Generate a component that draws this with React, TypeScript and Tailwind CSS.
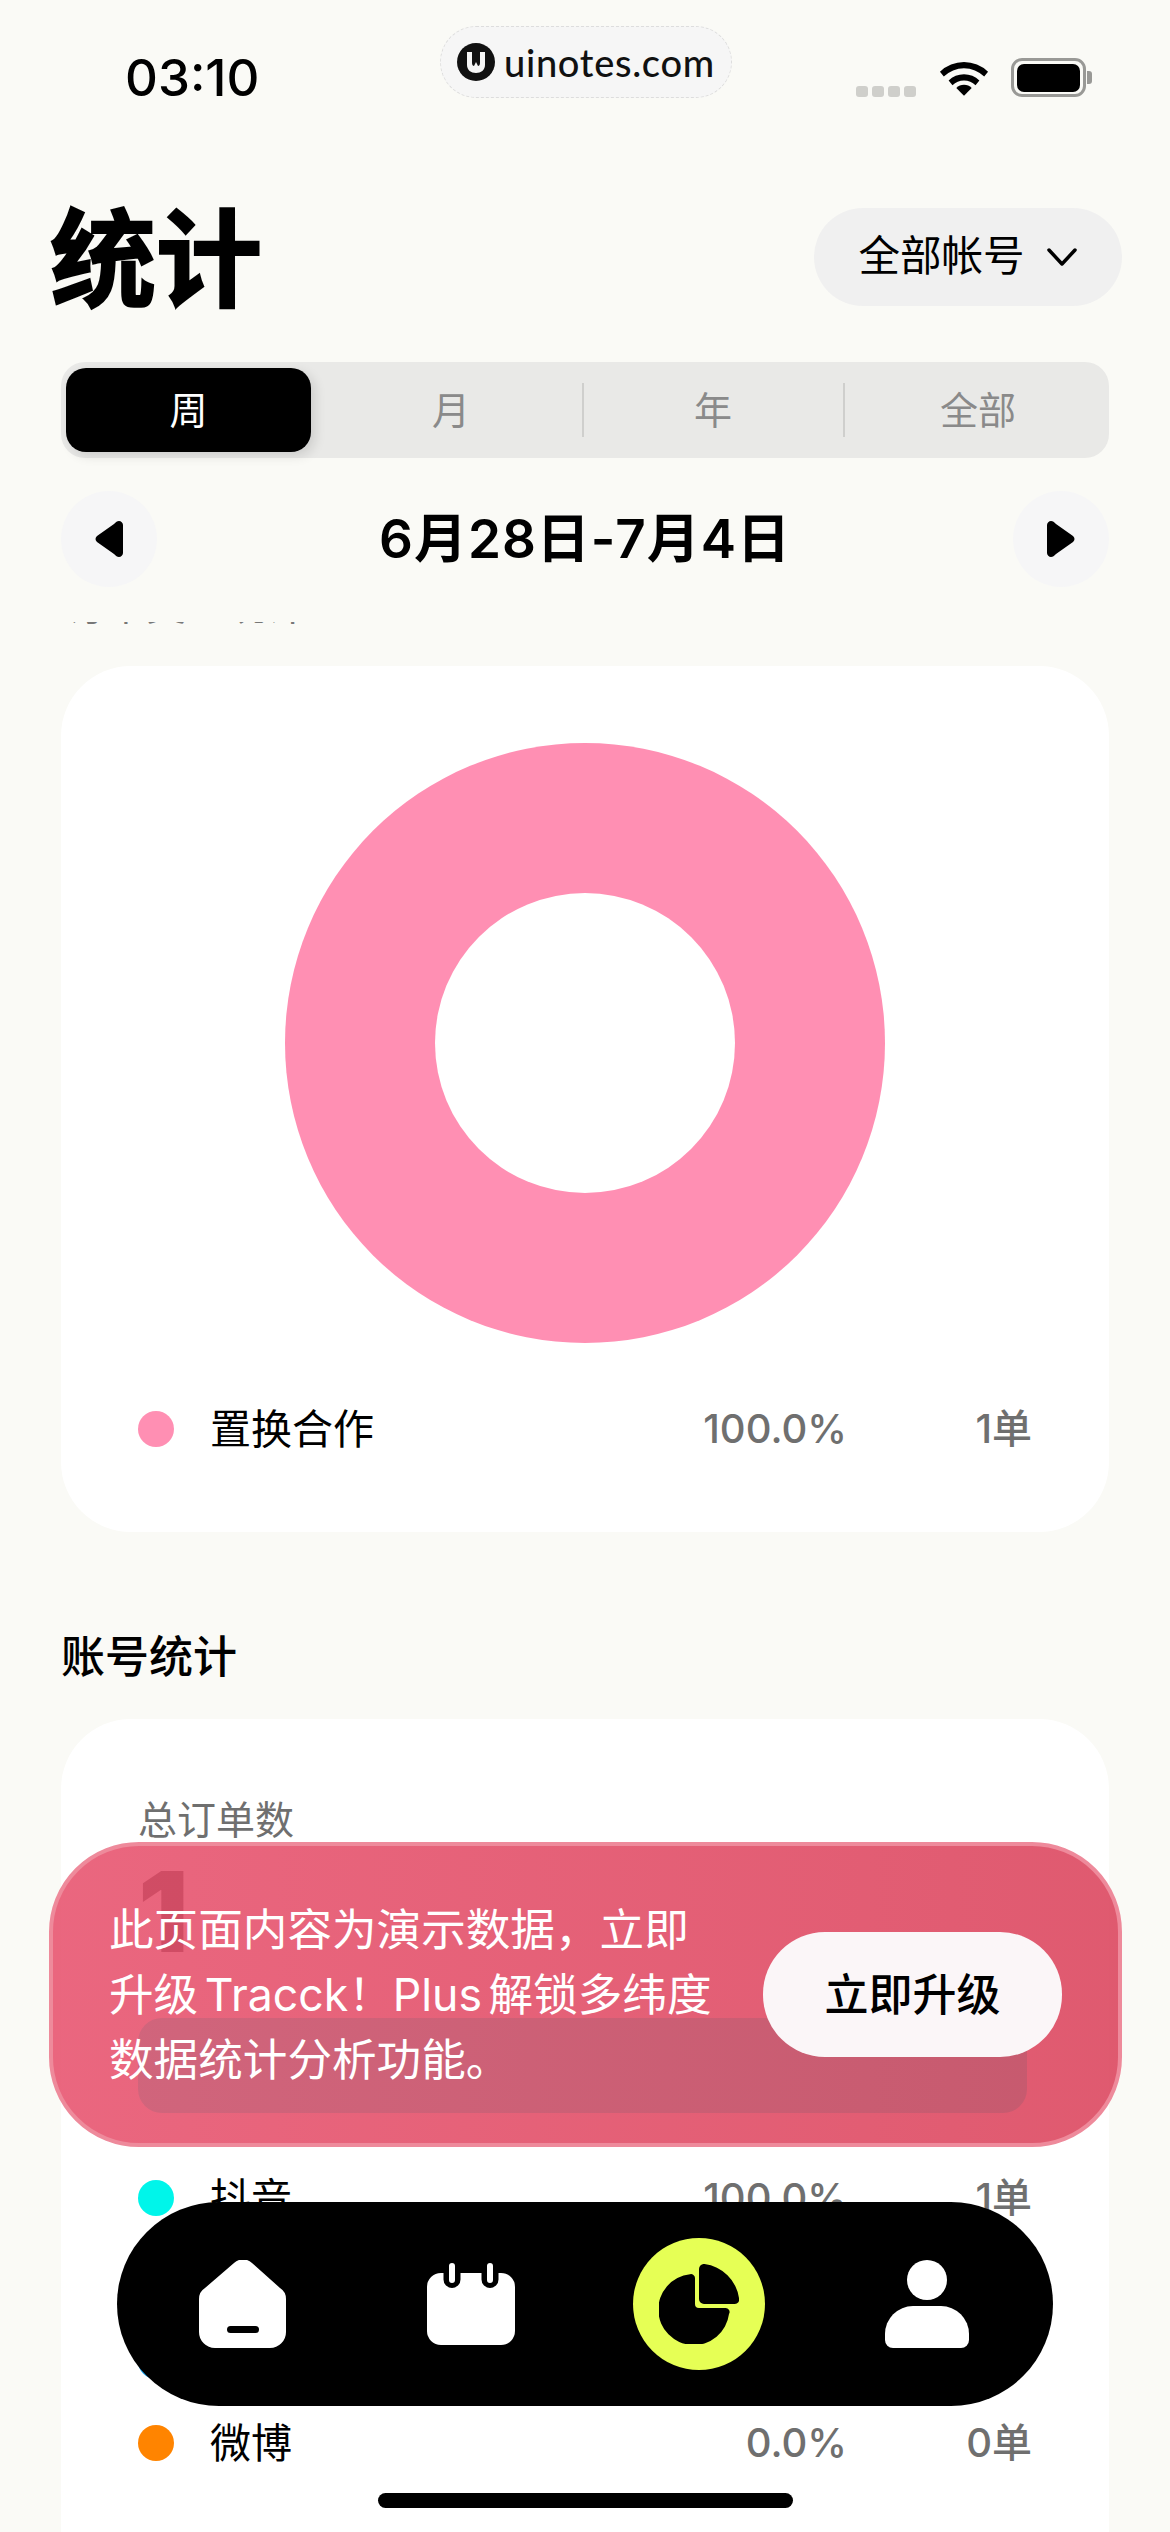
import React from "react";

const sans = "font-['Inter','Noto_Sans_CJK_SC',sans-serif]";

const tabs = [
  { label: "月", width: "w-[263px] pl-[1px]" },
  { label: "年", width: "w-[261px] pl-[1px]" },
  { label: "全部", width: "w-[266px] pl-[4px]" },
];

function StatusBar() {
  return (
    <div className="flex h-[130px] items-start justify-between pl-[125px] pr-[78px]">
      <span className="mt-[50px] text-[51px] leading-[56px] font-medium text-black">03:10</span>
      <div className="absolute left-[440px] top-[26px] flex h-[72px] w-[292px] items-center gap-[9px] rounded-[36px] border border-dashed border-[#dddddd] bg-[#f6f6f6] pl-[16px]">
        <svg width="38" height="38" viewBox="0 0 38 38">
          <circle cx="19" cy="19" r="19" fill="#111" />
          <path d="M10 9h5v11c0 2 1 3 2 3l2-4 2 4c1 0 2-1 2-3V9h5v13c0 5-4 8-9 8s-9-3-9-8z" fill="#f6f6f6" />
        </svg>
        <span className="text-[38px] font-medium leading-none tracking-[0.7px] text-[#111] font-['Lato',sans-serif]">uinotes.com</span>
      </div>
      <div className="mt-[58px] flex items-start">
        <div className="mt-[28px] flex gap-[4px]">
          <i className="h-[11px] w-[12px] rounded-[3px] bg-[#cfcfcb]" />
          <i className="h-[11px] w-[12px] rounded-[3px] bg-[#cfcfcb]" />
          <i className="h-[11px] w-[12px] rounded-[3px] bg-[#cfcfcb]" />
          <i className="h-[11px] w-[12px] rounded-[3px] bg-[#cfcfcb]" />
        </div>
        <svg className="ml-[23px] mt-[1px]" width="50" height="37" viewBox="0 0 52 38">
          <path d="M1 13a36 36 0 0 1 50 0l-4 5a30 30 0 0 0-42 0z" fill="#000" />
          <path d="M10 22a23 23 0 0 1 32 0l-4 5a17 17 0 0 0-24 0z" fill="#000" />
          <path d="M18 30a11 11 0 0 1 16 0l-8 8z" fill="#000" />
        </svg>
        <div className="ml-[22px] flex h-[39px] w-[75px] items-center justify-center rounded-[11px] border-[3px] border-[#999996]">
          <div className="h-[28px] w-[63px] rounded-[7px] bg-black" />
        </div>
        <div className="ml-[1px] mt-[13px] h-[13px] w-[5px] rounded-r-[3px] bg-[#999996]" />
      </div>
    </div>
  );
}

function Row({ color, name, pct, count, className }: { color: string; name: string; pct?: string; count?: string; className?: string }) {
  return (
    <div className={"flex items-center " + (className ?? "")}>
      <span className="h-[36px] w-[36px] rounded-full" style={{ backgroundColor: color }} />
      <span className="ml-[36px] flex-1 text-[41px] leading-[50px] text-black">{name}</span>
      <span className="w-[200px] text-right text-[40px] leading-[50px] font-medium text-[#6f6f6f]">{pct}</span>
      <span className="w-[185px] text-right text-[40px] leading-[50px] font-medium text-[#6f6f6f]">{count}</span>
    </div>
  );
}

function NavIcons() {
  return (
    <>
      <svg width="88" height="88" viewBox="0 0 88 88">
        <path d="M35 3a13 13 0 0 1 18 0l28 25a13 13 0 0 1 6 11v33a16 16 0 0 1-16 16H16A16 16 0 0 1 0 72V39a13 13 0 0 1 6-11z" fill="#fff" />
        <rect x="28" y="66" width="32" height="7" rx="3.5" fill="#000" />
      </svg>
      <svg className="ml-[140px]" width="88" height="82" viewBox="0 0 88 82">
        <path d="M14 10h60a14 14 0 0 1 14 14v44a14 14 0 0 1-14 14H14A14 14 0 0 1 0 68V24a14 14 0 0 1 14-14z" fill="#fff" />
        <path d="M25 0v16.5M63 0v16.5" stroke="#000" strokeWidth="17" strokeLinecap="round" />
        <path d="M25 3v14M63 3v14" stroke="#fff" strokeWidth="6" strokeLinecap="round" />
      </svg>
      <div className="ml-[118px] flex h-[132px] w-[132px] items-center justify-center rounded-full bg-[#e6ff55]">
        <svg width="80" height="80" viewBox="0 0 80 80">
          <path d="M36 14a4 4 0 0 0-5-3.8A35.5 35.5 0 1 0 70 50a4 4 0 0 0-4-6H40a4 4 0 0 1-4-4z" fill="#000" />
          <path d="M40 5a5 5 0 0 1 5.5-5A40 40 0 0 1 80 34a4.5 4.5 0 0 1-4.5 6H45a5 5 0 0 1-5-5z" fill="#000" />
        </svg>
      </div>
      <svg className="ml-[120px]" width="84" height="88" viewBox="0 0 84 88">
        <circle cx="42" cy="20" r="20" fill="#fff" />
        <path d="M28 46h28a28 28 0 0 1 28 28v6a8 8 0 0 1-8 8H8a8 8 0 0 1-8-8v-6a28 28 0 0 1 28-28z" fill="#fff" />
      </svg>
    </>
  );
}

export default function App() {
  return (
    <div className={"relative h-[2532px] w-[1170px] overflow-hidden bg-[#fafaf6] " + sans}>
      <StatusBar />

      <div className="flex items-center justify-between pl-[50px] pr-[48px] pt-[78px]">
        <h1 className="h-[98px] pt-[3px] text-[106px] leading-[98px] font-bold text-black [-webkit-text-stroke:2px_#000]">统计</h1>
        <div className="flex h-[98px] w-[308px] items-center justify-center gap-[21px] rounded-[49px] bg-[#f0f0f0]">
          <span className="text-[41.5px] leading-none text-black">全部帐号</span>
          <svg width="32" height="20" viewBox="0 0 32 20">
            <path d="M3 3l13 14L29 3" fill="none" stroke="#000" strokeWidth="3.5" strokeLinecap="round" strokeLinejoin="round" />
          </svg>
        </div>
      </div>

      <div className="mx-[61px] mt-[56px] flex h-[96px] items-center rounded-[24px] bg-[#e9e9e7] pl-[5px]">
        <div className="flex h-[84px] w-[246px] items-center justify-center rounded-[20px] bg-black text-[38px] leading-none text-white shadow-[4px_4px_12px_rgba(0,0,0,0.12)]">
          周
        </div>
        <div className="ml-[8px] flex">
          {tabs.map((tab, i) => (
            <div key={tab.label} className={"relative flex h-[84px] items-center justify-center text-[38px] leading-none text-[#8a8a8a] " + tab.width}>
              {tab.label}
              {i > 0 && <span className="absolute left-0 top-[15px] h-[54px] w-[2px] bg-[#cfcfcd]" />}
            </div>
          ))}
        </div>
      </div>

      <div className="mx-[61px] mt-[33px] flex h-[96px] items-center justify-between">
        <div className="flex h-[96px] w-[96px] items-center justify-center rounded-full bg-[#f6f6f7]">
          <svg width="28" height="36" viewBox="0 0 28 36">
            <path d="M24 0c2 0 4 2 4 4v28c0 2-2 4-4 4-2 0-3-1-5-3L2 21c-2-2-2-4 0-6L19 3c2-2 3-3 5-3z" fill="#000" />
          </svg>
        </div>
        <span className="text-[53px] leading-none font-semibold tracking-[1px] text-black">6月28日-7月4日</span>
        <div className="flex h-[96px] w-[96px] items-center justify-center rounded-full bg-[#f6f6f7]">
          <svg width="28" height="36" viewBox="0 0 28 36">
            <path d="M4 0c-2 0-4 2-4 4v28c0 2 2 4 4 4 2 0 3-1 5-3l17-12c2-2 2-4 0-6L9 3C7 1 6 0 4 0z" fill="#000" />
          </svg>
        </div>
      </div>

      <div className="mx-[61px] mt-[35px] flex h-[2px] items-end overflow-hidden pl-[5px]">
        <span className="mb-[13px] text-[40px] leading-[10px] text-[#777777]">订单类型统计</span>
      </div>

      <section className="mx-[61px] mt-[42px] h-[866px] rounded-[70px] bg-white px-[77px] pt-[77px]">
        <div className="mx-auto flex h-[600px] w-[600px] items-center justify-center rounded-full bg-[#ff8fb3]">
          <div className="h-[300px] w-[300px] rounded-full bg-white" />
        </div>
        <Row color="#ff8fb3" name="置换合作" pct="100.0%" count="1单" className="mt-[61px]" />
      </section>

      <h2 className="ml-[61px] mt-[98px] text-[44px] leading-[54px] font-medium text-black">账号统计</h2>

      <section className="mx-[61px] mt-[35px] h-[900px] rounded-[70px] bg-white px-[77px] pt-[77px]">
        <p className="text-[39px] leading-[48px] text-[#6f6f6f]">总订单数</p>
        <p className="mt-[4px] h-[90px] text-[112px] leading-[126px] font-black text-black">1</p>
        <div className="mt-[80px] h-[95px] w-[889px] rounded-[24px] bg-[#00f5ea]" />
        <Row color="#00f5ea" name="抖音" pct="100.0%" count="1单" className="mt-[60px]" />
        <Row color="#1aa7f5" name="小红书" className="mt-[113px]" />
        <Row color="#ff8400" name="微博" pct="0.0%" count="0单" className="mt-[32px]" />
      </section>

      <div className="absolute left-[49px] top-[1842px] flex h-[305px] w-[1073px] items-center justify-between rounded-[90px] border-[4px] border-[#ee8a9b] bg-gradient-to-r from-[rgba(232,86,113,0.9)] to-[rgba(220,72,96,0.9)] px-[56px]">
        <p className="mt-[2px] w-[640px] text-[44.6px] leading-[65px] text-white [word-spacing:-6px]">
          此页面内容为演示数据，立即
          <br />
          升级 Tracck！Plus 解锁多纬度
          <br />
          数据统计分析功能。
        </p>
        <div className="flex h-[125px] w-[299px] shrink-0 items-center justify-center rounded-[62px] bg-[#fbf6f8] text-[44px] font-medium text-black">
          立即升级
        </div>
      </div>

      <div className="absolute left-[117px] top-[2202px] flex h-[204px] w-[936px] items-center rounded-[102px] bg-black pl-[82px]">
        <NavIcons />
      </div>

      <div className="absolute left-[378px] top-[2493px] h-[15px] w-[415px] rounded-full bg-black" />
    </div>
  );
}
